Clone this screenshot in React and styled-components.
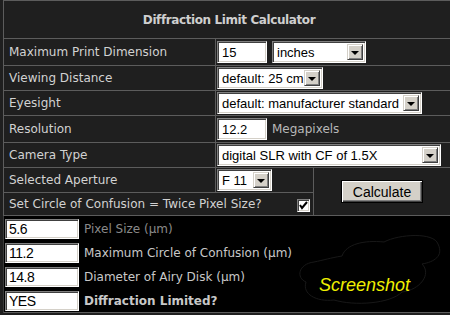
import React from "react";
import styled, { createGlobalStyle } from "styled-components";

const GlobalStyle = createGlobalStyle`
  html, body {
    margin: 0;
    padding: 0;
    background: #1f1f1f;
    overflow: hidden;
  }
`;

const Page = styled.div`
  width: 450px;
  height: 315px;
  overflow: hidden;
  padding-left: 3px;
  box-sizing: border-box;
`;

const Frame = styled.div`
  width: 460px;
  border-top: 1px solid #5c5c5c;
  border-left: 1px solid #5c5c5c;
  background: #1f1f1f;
`;

const Title = styled.div`
  height: 37px;
  display: flex;
  align-items: center;
  justify-content: center;
  padding-right: 10px;
  border-bottom: 1px solid #5c5c5c;
  font-family: "DejaVu Sans", Verdana, sans-serif;
  font-weight: bold;
  font-size: 12px;
  letter-spacing: -0.4px;
  color: #cfcfcf;
`;

const Row = styled.div`
  display: grid;
  grid-template-columns: 212px 1fr;
  height: ${(p) => p.h}px;
  border-bottom: 1px solid #5c5c5c;
`;

const Label = styled.div`
  display: flex;
  align-items: center;
  padding-left: 5px;
  border-right: ${(p) => (p.plain ? "0" : "1px solid #5c5c5c")};
  font-family: "DejaVu Sans", Verdana, sans-serif;
  font-size: 12px;
  color: #d2d2d2;
  white-space: nowrap;
`;

const Cell = styled.div`
  display: flex;
  align-items: center;
  gap: 5px;
  padding-left: 1px;
`;

const Note = styled.span`
  font-family: "DejaVu Sans", Verdana, sans-serif;
  font-size: 12px;
  color: #b8b8b8;
`;

const Sunken = styled.div`
  box-sizing: border-box;
  height: 22px;
  width: ${(p) => p.w}px;
  display: flex;
  align-items: center;
  background: #fff;
  border-top: 1px solid #808080;
  border-left: 1px solid #808080;
  border-bottom: 1px solid #ffffff;
  border-right: 1px solid #ffffff;
  box-shadow: inset 1px 1px 0 #404040, inset -1px -1px 0 #d4d0c8;
  font-family: "Liberation Sans", Arial, sans-serif;
  font-size: 13px;
  color: #000;
  padding: 0 2px 0 4px;
  white-space: nowrap;
  overflow: hidden;
`;

const SelectText = styled.span`
  flex: 1;
  overflow: hidden;
`;

const ArrowButton = styled.span`
  box-sizing: border-box;
  flex: none;
  width: 16px;
  height: 16px;
  display: flex;
  align-items: center;
  justify-content: center;
  background: #d4d0c8;
  border-top: 1px solid #d4d0c8;
  border-left: 1px solid #d4d0c8;
  border-bottom: 1px solid #404040;
  border-right: 1px solid #404040;
  box-shadow: inset 1px 1px 0 #ffffff, inset -1px -1px 0 #808080;
  &::after {
    content: "";
    border-left: 4px solid transparent;
    border-right: 4px solid transparent;
    border-top: 4px solid #000;
    margin-top: 1px;
  }
`;

const Dropdown = ({ w, children }) => (
  <Sunken w={w}>
    <SelectText>{children}</SelectText>
    <ArrowButton />
  </Sunken>
);

const Split = styled.div`
  display: grid;
  grid-template-columns: 310px 1fr;
  border-bottom: 1px solid #5c5c5c;
`;

const SplitLeft = styled.div`
  border-right: 1px solid #5c5c5c;
`;

const LastRow = styled.div`
  height: 22px;
  display: flex;
  align-items: center;
  justify-content: space-between;
  padding: 0 3px 0 0;
`;

const Check = styled.span`
  box-sizing: border-box;
  width: 13px;
  height: 13px;
  margin-top: 2px;
  display: flex;
  align-items: center;
  justify-content: center;
  background: #fff;
  border-top: 1px solid #808080;
  border-left: 1px solid #808080;
  border-bottom: 1px solid #fff;
  border-right: 1px solid #fff;
  box-shadow: inset 1px 1px 0 #404040, inset -1px -1px 0 #d4d0c8;
`;

const ButtonCell = styled.div`
  display: flex;
  align-items: center;
  justify-content: center;
  padding-right: 14px;
`;

const Button = styled.button`
  box-sizing: border-box;
  width: 82px;
  height: 23px;
  padding: 0;
  background: #d4d0c8;
  border: 1px solid #000;
  box-shadow: inset 1px 1px 0 #ffffff, inset -1px -1px 0 #404040,
    inset -2px -2px 0 #808080;
  font-family: "Liberation Sans", Arial, sans-serif;
  font-size: 14px;
  color: #000;
`;

const Output = styled.div`
  position: relative;
  background: #000;
  height: 97px;
  box-sizing: border-box;
  border-left: 1px solid #3a3a3a;
  border-bottom: 1px solid #5c5c5c;
  padding: 3px 0 0 1px;
  display: flex;
  flex-direction: column;
  gap: 4px;
`;

const OutRow = styled.div`
  display: flex;
  align-items: center;
  gap: 5px;
  height: 20px;
`;

const OutBox = styled(Sunken)`
  height: 20px;
  padding-left: 3px;
  font-size: 14px;
  letter-spacing: -0.5px;
`;

const OutLabel = styled.span`
  font-family: "DejaVu Sans", Verdana, sans-serif;
  font-size: 12px;
  font-weight: ${(p) => (p.bold ? "bold" : "normal")};
  color: ${(p) => p.color || "#c8c8c8"};
`;

const Stamp = styled.div`
  position: absolute;
  left: 290px;
  top: 14px;
  width: 150px;
  height: 75px;
`;

const StampText = styled.span`
  position: absolute;
  left: 25px;
  top: 45px;
  font-family: "Liberation Sans", Arial, sans-serif;
  font-style: italic;
  font-size: 18px;
  color: #f0f000;
`;

const Tick = () => (
  <svg width="9" height="9" viewBox="0 0 9 9">
    <path d="M1 4 L3 7 L8 1" fill="none" stroke="#000" strokeWidth="2" />
  </svg>
);

const outputs = [
  { value: "5.6", label: "Pixel Size (µm)", color: "#8a8a8a" },
  { value: "11.2", label: "Maximum Circle of Confusion (µm)" },
  { value: "14.8", label: "Diameter of Airy Disk (µm)" },
  { value: "YES", label: "Diffraction Limited?", bold: true },
];

export default function App() {
  return (
    <Page>
      <GlobalStyle />
      <Frame>
        <Title>Diffraction Limit Calculator</Title>
        <Row h={26}>
          <Label>Maximum Print Dimension</Label>
          <Cell>
            <Sunken w={50}>15</Sunken>
            <Dropdown w={94}>inches</Dropdown>
          </Cell>
        </Row>
        <Row h={24}>
          <Label>Viewing Distance</Label>
          <Cell>
            <Dropdown w={106}>default: 25 cm</Dropdown>
          </Cell>
        </Row>
        <Row h={24}>
          <Label>Eyesight</Label>
          <Cell>
            <Dropdown w={205}>default: manufacturer standard</Dropdown>
          </Cell>
        </Row>
        <Row h={26}>
          <Label>Resolution</Label>
          <Cell>
            <Sunken w={50}>12.2</Sunken>
            <Note>Megapixels</Note>
          </Cell>
        </Row>
        <Row h={24}>
          <Label>Camera Type</Label>
          <Cell>
            <Dropdown w={224}>digital SLR with CF of 1.5X</Dropdown>
          </Cell>
        </Row>
        <Split>
          <SplitLeft>
            <Row h={24}>
              <Label>Selected Aperture</Label>
              <Cell>
                <Dropdown w={55}>F 11</Dropdown>
              </Cell>
            </Row>
            <LastRow>
              <Label plain>Set Circle of Confusion = Twice Pixel Size?</Label>
              <Check>
                <Tick />
              </Check>
            </LastRow>
          </SplitLeft>
          <ButtonCell>
            <Button>Calculate</Button>
          </ButtonCell>
        </Split>
      </Frame>
      <Output>
        {outputs.map((o) => (
          <OutRow key={o.value}>
            <OutBox w={74}>{o.value}</OutBox>
            <OutLabel bold={o.bold} color={o.color}>
              {o.label}
            </OutLabel>
          </OutRow>
        ))}
        <Stamp>
          <svg width="150" height="75" viewBox="0 0 150 75">
            <path
              d="M12 52 C2 48 4 34 20 32 C30 30 36 28 48 26 C52 14 70 10 90 12 C105 4 140 2 144 14 C150 26 140 32 128 34 C138 44 126 60 108 62 C96 74 60 76 40 70 C22 72 8 64 12 52 Z"
              fill="none"
              stroke="#181818"
              strokeWidth="1"
            />
          </svg>
          <StampText>Screenshot</StampText>
        </Stamp>
      </Output>
    </Page>
  );
}
